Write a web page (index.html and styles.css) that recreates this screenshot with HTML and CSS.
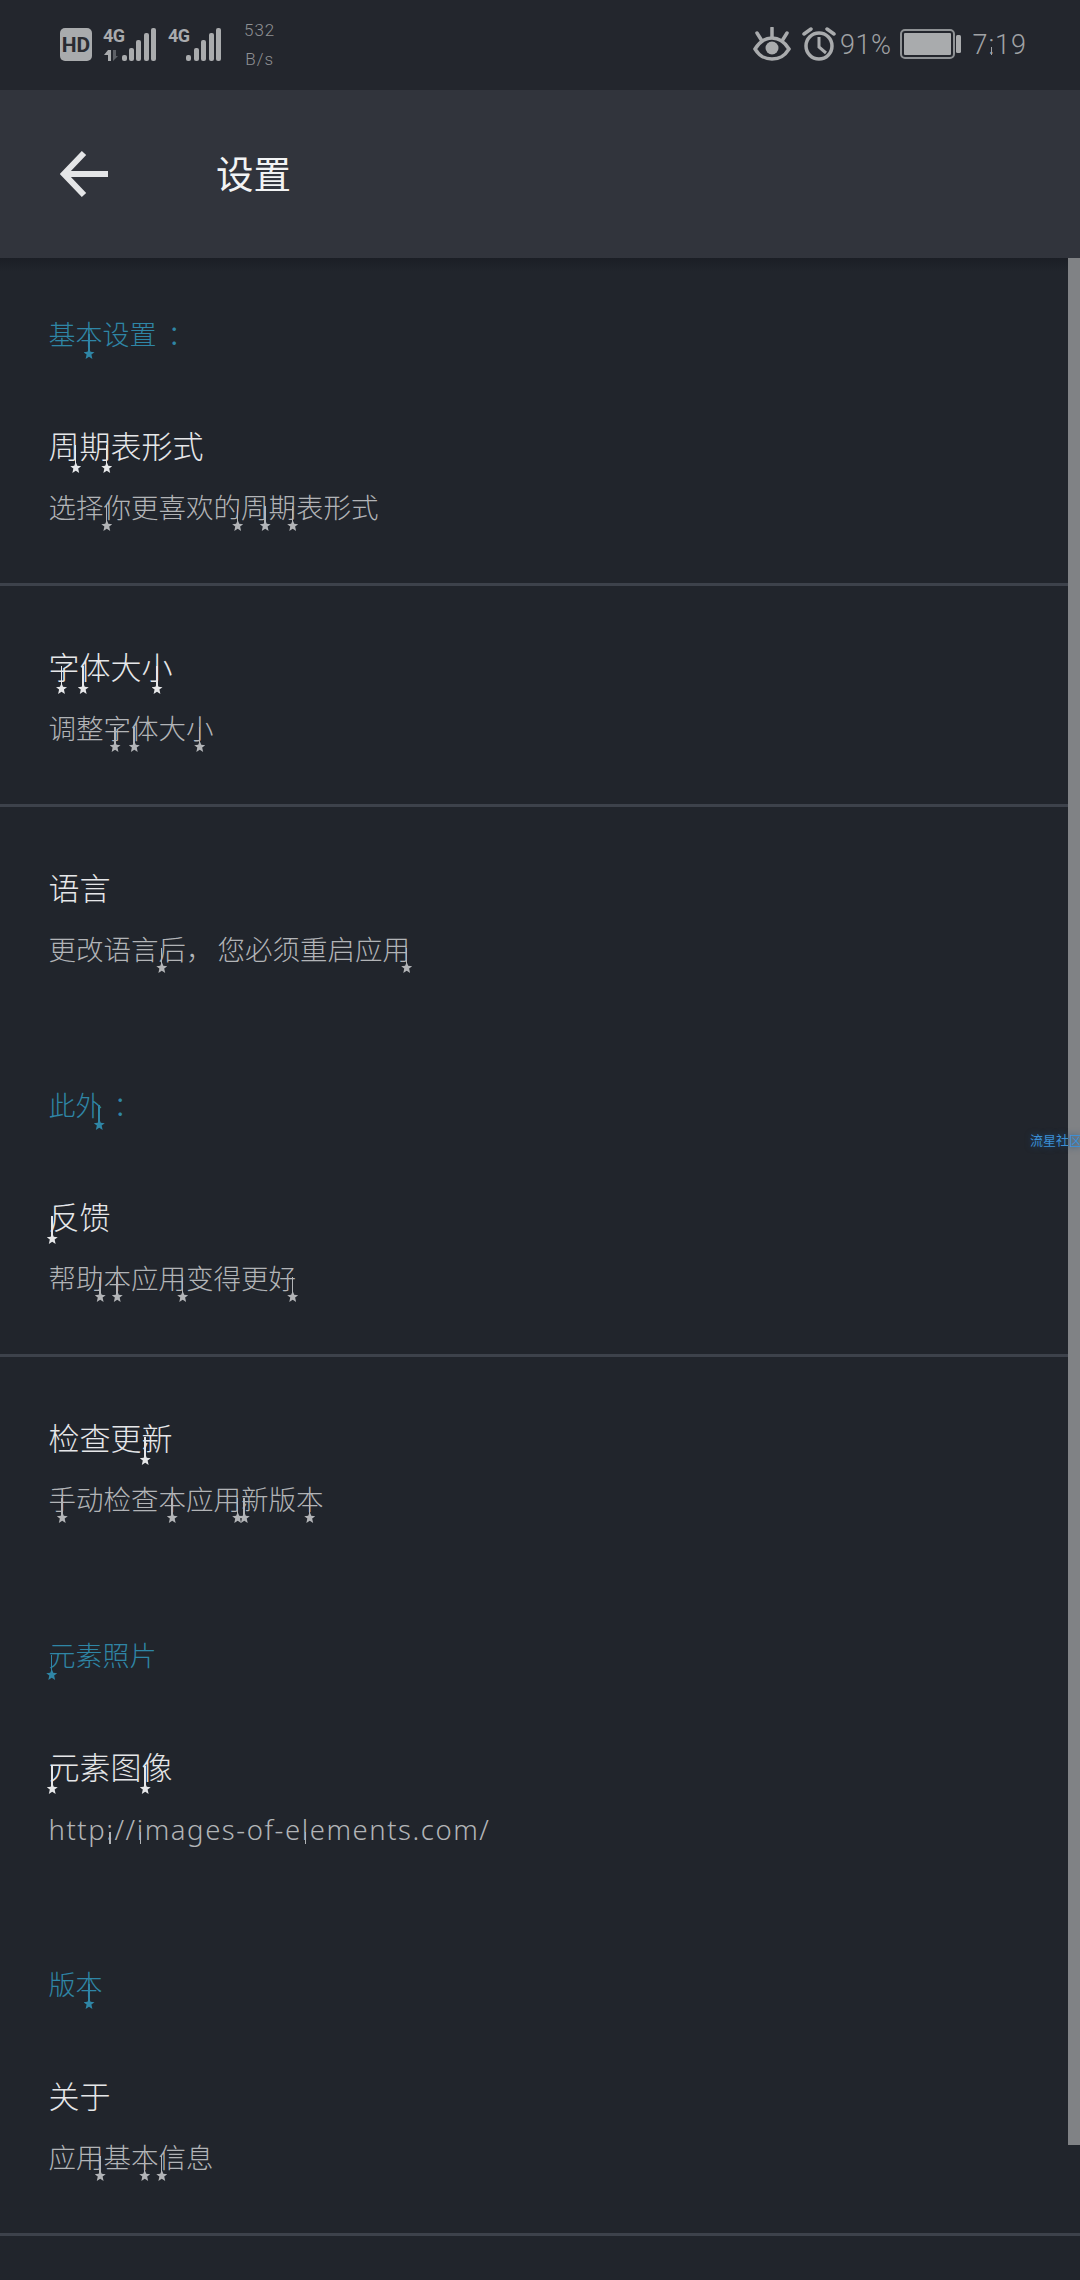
FILE: index.html
```html
<!DOCTYPE html>
<html lang="zh-CN">
<head>
<meta charset="utf-8">
<title>设置</title>
<link rel="stylesheet" href="styles.css">
</head>
<body>
<div class="screen">
  <header class="status">
    <div class="status-left">
      <svg class="hd" width="32" height="33" viewBox="0 0 32 33"><rect width="32" height="33" rx="5" fill="#a9abad"/><text x="16" y="24" text-anchor="middle" class="hd-text">HD</text></svg>
      <svg class="signal" width="120" height="35" viewBox="0 0 120 35">
        <text x="0" y="15" class="sig-text">4G</text>
        <path d="M5 23v11h3V23zM5 23l-4 5h4z" fill="#a9abad"/>
        <path d="M10 23v11l5-5h-2v-6z" fill="#5d6066"/>
        <g fill="#a9abad">
          <rect x="19" y="28" width="5" height="6" rx="2"/><rect x="26" y="21" width="5" height="13" rx="2"/><rect x="33" y="13" width="5" height="21" rx="2"/><rect x="41" y="6" width="5" height="28" rx="2"/><rect x="48" y="1" width="5" height="33" rx="2"/>
          <rect x="83" y="28" width="5" height="6" rx="2"/><rect x="91" y="21" width="5" height="13" rx="2"/><rect x="98" y="13" width="5" height="21" rx="2"/><rect x="106" y="6" width="5" height="28" rx="2"/><rect x="113" y="1" width="5" height="33" rx="2"/>
        </g>
        <text x="65" y="15" class="sig-text">4G</text>
      </svg>
      <div class="speed"><span>532</span><span>B/s</span></div>
    </div>
    <div class="status-right">
      <svg class="eye" width="38" height="34" viewBox="0 0 38 34"><path d="M2 22C7 14 12 11 19 11s12 3 17 11c-5 8-10 10-17 10S7 30 2 22z" fill="none" stroke="#a9abad" stroke-width="3.5"/><circle cx="19" cy="21" r="6.5" fill="#a9abad"/><path d="M19 1v9M4 6l5 8M34 6l-5 8" stroke="#a9abad" stroke-width="3.5" stroke-linecap="round"/></svg>
      <svg class="alarm" width="34" height="34" viewBox="0 0 34 34"><circle cx="17" cy="19" r="13" fill="none" stroke="#a9abad" stroke-width="3.5"/><path d="M17 10v10l7 6" fill="none" stroke="#a9abad" stroke-width="3"/><path d="M2 7l7-5M32 7l-7-5" stroke="#a9abad" stroke-width="3.5" stroke-linecap="round"/></svg>
      <span class="pct">91%</span>
      <svg class="battery" width="62" height="30" viewBox="0 0 62 30"><rect x="1" y="1" width="53" height="28" rx="4" fill="none" stroke="#8f9295" stroke-width="2"/><rect x="4" y="4" width="47" height="22" rx="1" fill="#a9abad"/><rect x="56" y="6" width="5" height="18" rx="1.5" fill="#a9abad"/></svg>
      <span class="clock">7<span class="s s-c">:</span>19</span>
    </div>
  </header>

  <nav class="toolbar">
    <svg class="back" width="50" height="50" viewBox="0 0 50 50"><path d="M48 25H5M24 4L4 25l20 21" fill="none" stroke="#e4e5e7" stroke-width="6"/></svg>
    <h1 class="page-title">设置</h1>
  </nav>

  <main class="list">
    <h2 class="section">基<span class="t t-c">本</span>设置<span class="colon">：</span></h2>
    <section class="row ruled">
      <div class="title"><span class="t t-r">周</span><span class="t t-r">期</span>表形式</div>
      <div class="sub">选择<span class="t t-l">你</span>更喜欢<span class="t t-r">的</span><span class="t t-r">周</span><span class="t t-r">期</span>表形式</div>
    </section>
    <section class="row ruled">
      <div class="title"><span class="t t-cl">字</span><span class="t t-l">体</span>大<span class="t t-c">小</span></div>
      <div class="sub">调整<span class="t t-cl">字</span><span class="t t-l">体</span>大<span class="t t-c">小</span></div>
    </section>
    <section class="row">
      <div class="title">语言</div>
      <div class="sub">更改语言<span class="t t-l">后</span><span class="comma">，</span>您必须重启应<span class="t t-r">用</span></div>
    </section>

    <h2 class="section">此<span class="t t-r">外</span><span class="colon">：</span></h2>
    <section class="row ruled">
      <div class="title"><span class="t t-l">反</span>馈</div>
      <div class="sub">帮<span class="t t-r">助</span><span class="t t-c">本</span>应<span class="t t-r">用</span>变得更<span class="t t-r">好</span></div>
    </section>
    <section class="row">
      <div class="title">检查更<span class="t t-l">新</span></div>
      <div class="sub"><span class="t t-c">手</span>动检查<span class="t t-c">本</span>应<span class="t t-r">用</span><span class="t t-l">新</span>版<span class="t t-c">本</span></div>
    </section>

    <h2 class="section"><span class="t t-l">元</span>素照片</h2>
    <section class="row">
      <div class="title"><span class="t t-l">元</span>素图<span class="t t-l">像</span></div>
      <div class="sub url">http<span class="s">:</span>//<span class="s">i</span>mages-of-e<span class="s">l</span>ements.com/</div>
    </section>

    <h2 class="section">版<span class="t t-c">本</span></h2>
    <section class="row ruled">
      <div class="title">关于</div>
      <div class="sub">应<span class="t t-r">用</span>基<span class="t t-c">本</span><span class="t t-l">信</span>息</div>
    </section>
  </main>

  <div class="scrollbar"></div>
  <div class="watermark">流星社区</div>
</div>
</body>
</html>
```
FILE: styles.css
```css
* { box-sizing: border-box; margin: 0; padding: 0; }
html, body { background: #21252c; }
body { width: 1080px; height: 2280px; overflow: hidden; font-family: "Noto Sans CJK SC", "Noto Sans", sans-serif; font-weight: 300; }
.screen { position: relative; width: 1080px; height: 2280px; overflow: hidden; background: #21252c; }

.status { height: 90px; background: #23262d; display: flex; justify-content: space-between; align-items: center; padding: 0 53px 0 60px; color: #a0a2a5; }
.status-left, .status-right { display: flex; align-items: center; }
.hd { margin-top: -2px; }
.hd-text { font: 700 21px "Roboto", sans-serif; fill: #2a2c32; }
.signal { margin-left: 11px; margin-top: -2px; overflow: visible; }
.sig-text { font: 700 18px "Roboto", sans-serif; fill: #a9abad; letter-spacing: -0.5px; }
.speed { display: flex; flex-direction: column; align-items: center; margin-left: 21px; font: 300 17px/29px "Roboto", sans-serif; letter-spacing: 1px; color: #8f9194; }
.eye { margin-right: 11px; margin-top: -3px; }
.alarm { margin-right: 4px; margin-top: -3px; }
.pct { font: 300 27px "Roboto", sans-serif; letter-spacing: 0.5px; margin-right: 9px; }
.battery { margin-right: 10px; margin-top: -2px; }
.clock { font: 300 27px "Roboto", sans-serif; letter-spacing: 1px; }

.toolbar { height: 168px; background: #31343c; display: flex; align-items: center; padding-left: 60px; }
.back { margin-right: 107px; }
.page-title { font-size: 37.5px; font-weight: 400; color: #f2f3f4; margin-top: -6px; margin-left: -1px; }

.list { background: linear-gradient(#1b1e25, #21252c 14px); }
.section { padding: 60px 48.5px 11px; font-size: 27px; line-height: 40px; font-weight: 300; color: #2f86a6; }
.section:first-child { padding-top: 56px; }
.colon { display: inline-block; padding-left: 11px; }
.comma { margin-right: 4px; }
.row { padding: 58px 48.5px 57px; }
.ruled { border-bottom: 3px solid #3d424b; }
.title { font-size: 31px; line-height: 44px; color: #e6e7e9; }
.sub { margin-top: 19px; font-size: 27.5px; line-height: 40px; color: #b2b4b7; }
.url { font-family: "Noto Sans", sans-serif; letter-spacing: 1.55px; padding-top: 3px; margin-bottom: -3px; }

.t { position: relative; display: inline-block; }
.t::before { content: ""; position: absolute; top: 50%; bottom: 0; width: 1.5px; margin-left: -1px; background: currentColor; }
.t::after { content: ""; position: absolute; bottom: -5px; width: 11px; height: 11px; margin-left: -5.5px; background: currentColor; clip-path: polygon(50% 0, 64% 34%, 100% 38%, 72% 60%, 81% 100%, 50% 80%, 19% 100%, 28% 60%, 0 38%, 36% 34%); }
.title .t::after { bottom: -6px; }
.t-l::before, .t-l::after { left: 12%; }
.t-cl::before, .t-cl::after { left: 42%; }
.t-c::before, .t-c::after { left: 50%; }
.t-r::before, .t-r::after { left: 88%; }

.s { position: relative; display: inline-block; }
.s::after { content: ""; position: absolute; top: 55%; bottom: 6px; left: 50%; width: 1.5px; margin-left: -1px; background: currentColor; }

.scrollbar { position: absolute; top: 258px; right: 0; width: 12px; height: 1887px; background: #808285; }
.watermark { position: absolute; top: 1131px; left: 1030px; width: 60px; white-space: nowrap; font-size: 13px; line-height: 18px; font-weight: 400; color: #3c8fd4; text-shadow: 0 0 6px #1c4c78; }
```
